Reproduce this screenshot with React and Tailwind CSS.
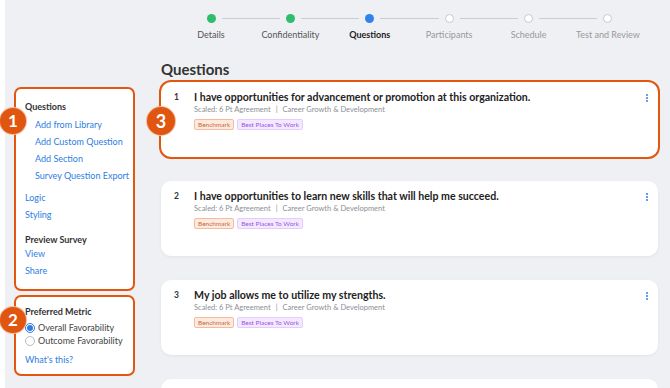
import React from "react";

const steps = [
  { label: "Details", state: "done" },
  { label: "Confidentiality", state: "done" },
  { label: "Questions", state: "current" },
  { label: "Participants", state: "todo" },
  { label: "Schedule", state: "todo" },
  { label: "Test and Review", state: "todo" },
];

const questions = [
  { n: 1, t: "I have opportunities for advancement or promotion at this organization.", hl: true },
  { n: 2, t: "I have opportunities to learn new skills that will help me succeed." },
  { n: 3, t: "My job allows me to utilize my strengths." },
  { n: 4, t: "" },
];

function Dot({ state }) {
  if (state === "done") return <div className="w-[9px] h-[9px] rounded-full bg-[#2dbd6b]" />;
  if (state === "current") return <div className="w-[9px] h-[9px] rounded-full bg-[#3183ec]" />;
  return <div className="w-[9px] h-[9px] rounded-full bg-white border border-[#c5c8ce]" />;
}

function Kebab() {
  return (
    <div className="flex flex-col gap-[1px] items-center pt-[4px]">
      <div className="w-[2px] h-[2px] rounded-full bg-[#2f7fe6]" />
      <div className="w-[2px] h-[2px] rounded-full bg-[#2f7fe6]" />
      <div className="w-[2px] h-[2px] rounded-full bg-[#2f7fe6]" />
    </div>
  );
}

function Card({ q }) {
  return (
    <div
      className={
        "relative shrink-0 h-[75px] bg-white rounded-[10px] shadow-[0_1px_3px_rgba(0,0,0,0.06)] flex pl-[13px] pr-[10px] pt-[8px] " +
        (q.hl ? "ring-2 ring-[#e3560f]" : "")
      }
    >
      <div className="w-[20px] text-[8.5px] leading-[14px] font-bold text-[#333]">{q.t ? q.n : ""}</div>
      <div className="flex-1 flex flex-col">
        {q.t && (
          <>
            <div className="text-[10.6px] leading-[14px] font-bold text-[#222]">{q.t}</div>
            <div className="text-[7.5px] leading-[12px] mt-[0px] text-[#8c8f95]">
              Scaled: 6 Pt Agreement<span className="mx-[5px]">|</span>Career Growth &amp; Development
            </div>
            <div className="flex gap-[3px] mt-[3px]">
              <span className="h-[11px] px-[3px] text-[6.5px] leading-[9px] rounded-[2px] border border-[#f5bb9c] bg-[#fde9de] text-[#c46a42]">
                Benchmark
              </span>
              <span className="h-[11px] px-[3px] text-[6.5px] leading-[9px] rounded-[2px] border border-[#e4cdfd] bg-[#f4eaff] text-[#9b55e8]">
                Best Places To Work
              </span>
            </div>
          </>
        )}
      </div>
      <Kebab />
    </div>
  );
}

function Badge({ n, cls }) {
  return (
    <div
      className={
        "absolute rounded-full bg-[#e0550f] text-white font-bold flex items-center justify-center border border-white/60 " +
        cls
      }
    >
      {n}
    </div>
  );
}

export default function App() {
  const link = "text-[#2e7de2] text-[9px] leading-[12px]";
  return (
    <div
      className="relative w-[670px] h-[388px] overflow-hidden bg-[#eff0f4] flex"
      style={{ fontFamily: "Lato, 'Open Sans', sans-serif" }}
    >
      <div className="w-[5px] shrink-0 bg-white" />
      <div className="flex-1 flex flex-col">
        {/* stepper */}
        <div className="h-[50px] shrink-0 pt-[14px] pl-[201.5px]">
          <div className="flex items-center">
            {steps.map((s, i) => (
              <React.Fragment key={s.label}>
                <Dot state={s.state} />
                {i < steps.length - 1 && <div className="w-[58.4px] mx-[6px] h-px bg-[#c9ccd2]" />}
              </React.Fragment>
            ))}
          </div>
          <div className="flex -ml-[35.2px] mt-[6px]">
            {steps.map((s) => (
              <div
                key={s.label}
                className={
                  "w-[79.4px] text-center text-[9px] leading-[12px] whitespace-nowrap " +
                  (s.state === "current"
                    ? "font-bold text-[#222]"
                    : s.state === "done"
                    ? "text-[#555]"
                    : "text-[#999]")
                }
              >
                {s.label}
              </div>
            ))}
          </div>
        </div>
        <div className="flex flex-1">
          {/* sidebar */}
          <div className="w-[156px] shrink-0 pl-[9px] pt-[37px] flex flex-col gap-[4px]">
            <div className="w-[121px] h-[204px] rounded-[7px] border-2 border-[#e3560f] bg-white pl-[9px] pt-[12px] flex flex-col">
              <div className="text-[9px] leading-[12px] font-bold text-[#333]">Questions</div>
              <div className="pl-[10px] flex flex-col gap-[5px] mt-[6px]">
                <div className={link}>Add from Library</div>
                <div className={link}>Add Custom Question</div>
                <div className={link}>Add Section</div>
                <div className={link}>Survey Question Export</div>
              </div>
              <div className={link + " mt-[10px]"}>Logic</div>
              <div className={link + " mt-[5px]"}>Styling</div>
              <div className="text-[9px] leading-[12px] font-bold text-[#333] mt-[13px]">Preview Survey</div>
              <div className={link + " mt-[2px]"}>View</div>
              <div className={link + " mt-[5px]"}>Share</div>
            </div>
            <div className="w-[121px] h-[81px] rounded-[7px] border-2 border-[#e3560f] bg-white pl-[9px] pt-[9px] flex flex-col">
              <div className="text-[9px] leading-[12px] font-bold text-[#333]">Preferred Metric</div>
              <div className="flex items-center gap-[3px] mt-[4px]">
                <div className="w-[10px] h-[10px] rounded-full border border-[#2e7de2] flex items-center justify-center bg-white">
                  <div className="w-[6px] h-[6px] rounded-full bg-[#2e7de2]" />
                </div>
                <span className="text-[9px] leading-[12px] text-[#444]">Overall Favorability</span>
              </div>
              <div className="flex items-center gap-[3px] mt-[1px]">
                <div className="w-[10px] h-[10px] rounded-full border border-[#b8bcc3] bg-white" />
                <span className="text-[9px] leading-[12px] text-[#444]">Outcome Favorability</span>
              </div>
              <div className={link + " mt-[7px]"}>What's this?</div>
            </div>
          </div>
          {/* main */}
          <div className="w-[497px] flex flex-col pt-[7px]">
            <div className="text-[15px] leading-[24px] font-bold text-[#333] mb-[1px]">Questions</div>
            <div className="flex flex-col gap-[24px]">
              {questions.map((q) => (
                <Card key={q.n} q={q} />
              ))}
            </div>
          </div>
        </div>
      </div>
      <Badge n="1" cls="left-[-1px] top-[107px] w-[28px] h-[28px] text-[17px]" />
      <Badge n="2" cls="left-[-1px] top-[306px] w-[28px] h-[28px] text-[17px]" />
      <Badge n="3" cls="left-[146px] top-[106px] w-[30px] h-[30px] text-[18px]" />
    </div>
  );
}
